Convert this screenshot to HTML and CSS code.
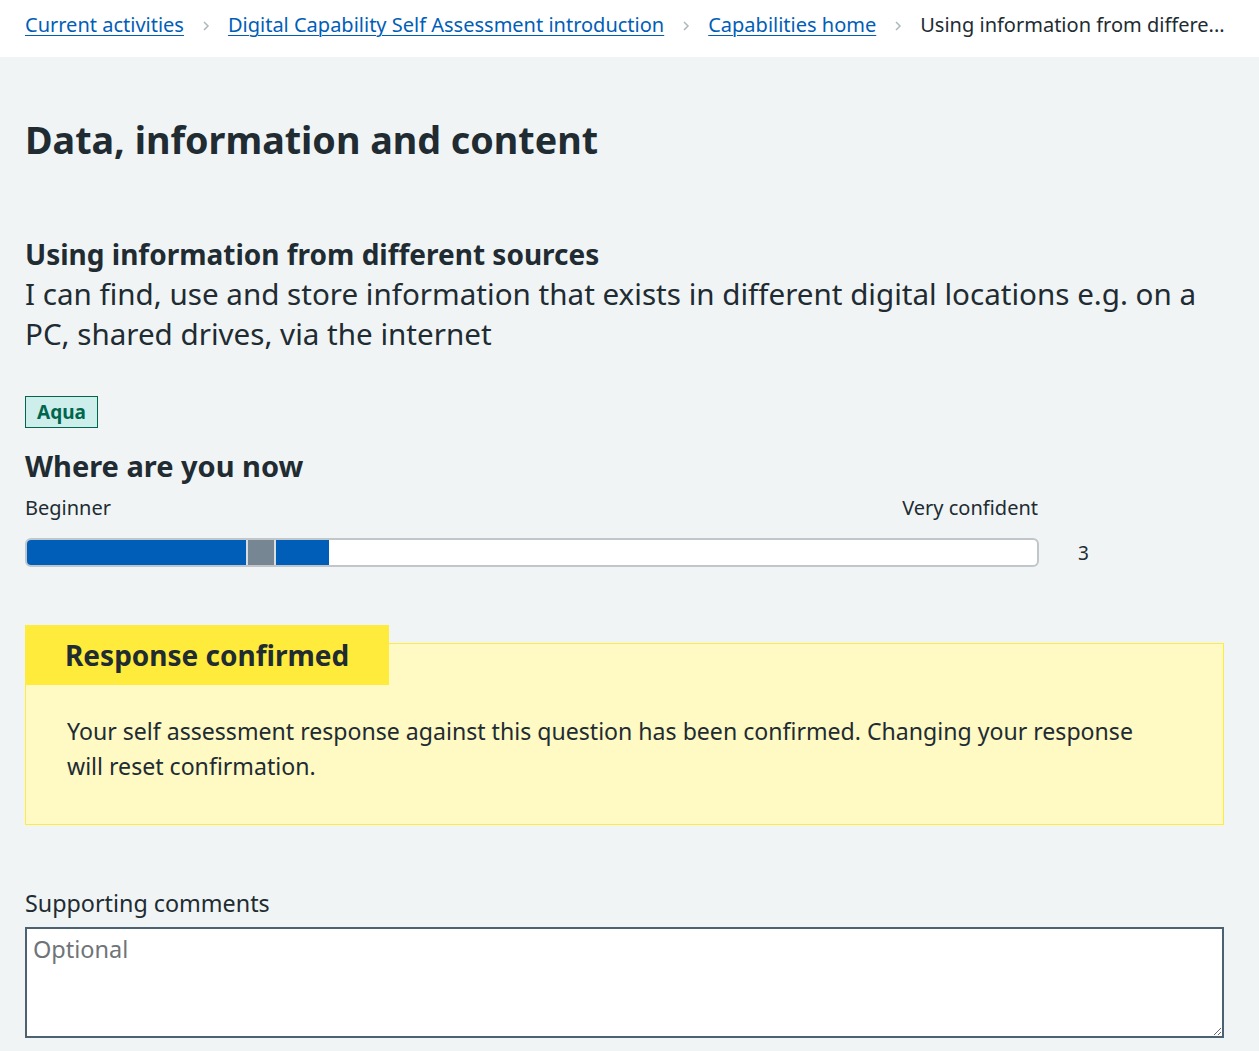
FILE: index.html
```html
<!DOCTYPE html>
<html lang="en">
<head>
<meta charset="utf-8">
<title>Data, information and content</title>
<link rel="stylesheet" href="styles.css">
</head>
<body>
<nav class="breadcrumb">
  <ol class="crumbs">
    <li><a href="#">Current activities</a></li>
    <li class="sep"><svg width="10" height="12" viewBox="0 0 10 12"><path d="M3 2l4 4-4 4" fill="none" stroke="#aeb7bd" stroke-width="1.5"/></svg></li>
    <li><a href="#">Digital Capability Self Assessment introduction</a></li>
    <li class="sep"><svg width="10" height="12" viewBox="0 0 10 12"><path d="M3 2l4 4-4 4" fill="none" stroke="#aeb7bd" stroke-width="1.5"/></svg></li>
    <li><a href="#">Capabilities home</a></li>
    <li class="sep"><svg width="10" height="12" viewBox="0 0 10 12"><path d="M3 2l4 4-4 4" fill="none" stroke="#aeb7bd" stroke-width="1.5"/></svg></li>
    <li class="current">Using information from differe...</li>
  </ol>
</nav>
<main class="main">
  <h1 class="title">Data, information and content</h1>
  <h2 class="question">Using information from different sources</h2>
  <p class="lead">I can find, use and store information that exists in different digital locations e.g. on a PC, shared drives, via the internet</p>
  <div class="tagrow"><span class="tag">Aqua</span></div>
  <h3 class="where">Where are you now</h3>
  <div class="scale-labels"><span>Beginner</span><span>Very confident</span></div>
  <div class="slider-row">
    <div class="track">
      <div class="fill" style="width:302px"></div>
      <div class="thumb" style="left:219px"></div>
    </div>
    <span class="value">3</span>
  </div>
  <div class="panel">
    <h3 class="panel-label">Response confirmed</h3>
    <p class="panel-text">Your self assessment response against this question has been confirmed. Changing your response will reset confirmation.</p>
  </div>
  <label class="field-label" for="comments">Supporting comments</label>
  <textarea id="comments" class="textarea" placeholder="Optional"></textarea>
</main>
</body>
</html>
```
FILE: styles.css
```css
* { box-sizing: border-box; }
html, body { margin: 0; padding: 0; }
body {
  font-family: "Noto Sans", "Open Sans", sans-serif;
  color: #212b32;
  background: #f0f4f5;
}
.breadcrumb {
  background: #ffffff;
  height: 57px;
  padding: 0 25px;
  display: flex;
  align-items: center;
}
.crumbs {
  list-style: none;
  margin: 0;
  padding: 0 0 8px 0;
  display: flex;
  align-items: center;
  gap: 17px;
  font-size: 20px;
  white-space: nowrap;
}
.crumbs a { color: #005eb8; text-decoration: underline; text-underline-offset: 3px; text-decoration-thickness: 1px; }
.crumbs .sep { display: flex; align-items: center; padding-top: 2px; }
.crumbs .current { color: #212b32; }
.main {
  padding: 59px 35px 20px 25px;
}
.title {
  margin: 0;
  font-size: 37.7px;
  line-height: 48px;
  font-weight: 700;
}
.question {
  margin: 72px 0 0 0;
  font-size: 28px;
  line-height: 36px;
  font-weight: 700;
}
.lead {
  margin: 2px 0 0 0;
  font-size: 29.6px;
  line-height: 40px;
}
.tagrow { margin-top: 42px; }
.tag {
  display: inline-block;
  background: #cdeeea;
  border: 1px solid #00664e;
  color: #00664e;
  font-weight: 700;
  font-size: 19px;
  line-height: 30px;
  height: 32px;
  padding: 0 11px;
}
.where {
  margin: 18px 0 0 0;
  font-size: 29px;
  line-height: 40px;
  font-weight: 700;
}
.scale-labels {
  width: 1013px;
  display: flex;
  justify-content: space-between;
  font-size: 20px;
  line-height: 26px;
  margin-top: 9px;
}
.slider-row {
  display: flex;
  align-items: center;
  gap: 39px;
  margin-top: 17px;
}
.track {
  position: relative;
  width: 1014px;
  height: 29px;
  background: #ffffff;
  border: 2px solid #c0c6ca;
  border-radius: 6px;
  overflow: hidden;
}
.fill {
  height: 100%;
  background: #005eb8;
}
.thumb {
  position: absolute;
  top: -2px;
  width: 30px;
  height: 29px;
  background: #768692;
  border: 2px solid #d8dde0;
}
.value { font-size: 19px; }
.panel {
  margin-top: 76px;
  background: #fff9c4;
  border: 1px solid #ffeb3b;
  padding: 0 60px 40px 41px;
}
.panel-label {
  display: block;
  width: fit-content;
  margin: -19px 0 0 -42px;
  background: #ffeb3b;
  font-size: 28px;
  line-height: 60px;
  padding: 0 40px;
  font-weight: 700;
}
.panel-text {
  margin: 29px 0 0 0;
  font-size: 23.1px;
  line-height: 35px;
}
.field-label {
  display: block;
  margin-top: 62px;
  font-size: 23.3px;
  line-height: 32px;
}
.textarea {
  display: block;
  width: 100%;
  height: 111px;
  margin-top: 8px;
  border: 2px solid #4c6272;
  border-radius: 0;
  background: #ffffff;
  font-family: inherit;
  font-size: 23.5px;
  padding: 4px 6px;
  color: #212b32;
}
.textarea::placeholder { color: #6f7479; }
```
